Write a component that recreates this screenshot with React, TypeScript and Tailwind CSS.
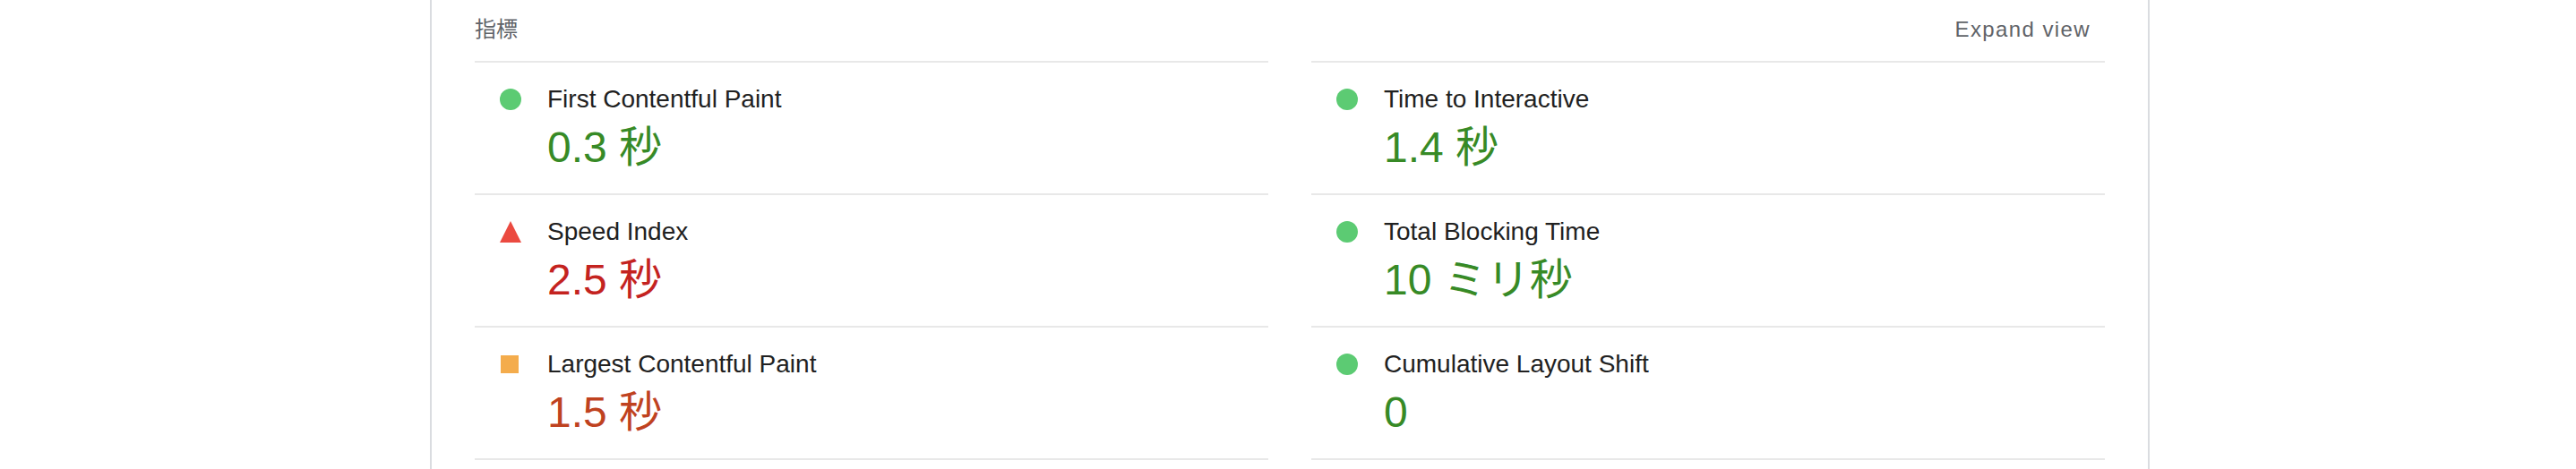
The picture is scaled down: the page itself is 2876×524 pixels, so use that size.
import React from "react";

type Rating = "pass" | "average" | "fail";

type Metric = {
  title: string;
  value: string;
  rating: Rating;
};

const columns: Metric[][] = [
  [
    { title: "First Contentful Paint", value: "0.3 秒", rating: "pass" },
    { title: "Speed Index", value: "2.5 秒", rating: "fail" },
    { title: "Largest Contentful Paint", value: "1.5 秒", rating: "average" },
  ],
  [
    { title: "Time to Interactive", value: "1.4 秒", rating: "pass" },
    { title: "Total Blocking Time", value: "10 ミリ秒", rating: "pass" },
    { title: "Cumulative Layout Shift", value: "0", rating: "pass" },
  ],
];

const valueColor: Record<Rating, string> = {
  pass: "text-[#378a26]",
  average: "text-[#bf421f]",
  fail: "text-[#c4231f]",
};

function ScoreIcon({ rating }: { rating: Rating }) {
  if (rating === "fail") {
    return (
      <svg width="24" height="24" viewBox="0 0 24 24" className="block">
        <polygon points="12,0 24,24 0,24" fill="#eb4a40" />
      </svg>
    );
  }
  if (rating === "average") {
    return <div className="ml-[1px] h-[20px] w-[20px] bg-[#f4ac4c]" />;
  }
  return <div className="h-[24px] w-[24px] rounded-full bg-[#5ccb73]" />;
}

function MetricRow({ metric }: { metric: Metric }) {
  return (
    <div className="flex border-t-2 border-[#e8e8e8] pt-[21px] pb-[18px] last:border-b-2">
      {/* score icon column */}
      <div className="flex h-[40px] w-[81px] shrink-0 items-center pl-[28px]">
        <ScoreIcon rating={metric.rating} />
      </div>
      <div>
        <div className="text-[28px] leading-[40px] text-[#212121]">{metric.title}</div>
        <div className={`pt-[1px] text-[48px] leading-[66px] ${valueColor[metric.rating]}`}>
          {metric.value}
        </div>
      </div>
    </div>
  );
}

export default function App() {
  return (
    <div className="h-[524px] w-full overflow-hidden bg-white font-['Liberation_Sans','Noto_Sans_CJK_JP',sans-serif]">
      <div className="ml-[480px] h-full w-[1920px] border-x-2 border-[#dadce0] px-[48px]">
        {/* header */}
        <div className="flex items-center justify-between pt-[17px] pb-[19px] text-[24px] leading-[32px] text-[#5f6368]">
          <span>指標</span>
          <span className="pr-[16px] tracking-[1.4px]">Expand view</span>
        </div>

        {/* metrics grid */}
        <div className="grid grid-cols-2 gap-x-[48px]">
          {columns.map((col, i) => (
            <div key={i} className="flex flex-col">
              {col.map((m) => (
                <MetricRow key={m.title} metric={m} />
              ))}
            </div>
          ))}
        </div>
      </div>
    </div>
  );
}
